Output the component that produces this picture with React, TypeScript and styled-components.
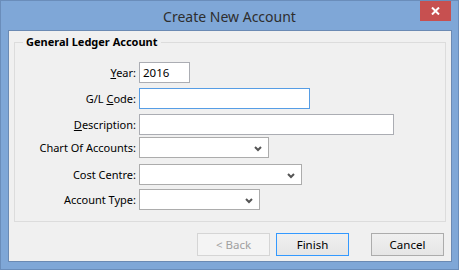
import styled, {createGlobalStyle} from 'styled-components'

const GlobalStyle = createGlobalStyle`
  html, body {
    margin: 0;
    padding: 0;
    background: #7ea6d6;
  }
  body {
    font-family: "Noto Sans", "Liberation Sans", sans-serif;
    font-size: 11px;
    color: #000;
  }
`

type FieldRow = {
  label: string
  hotkey?: number
  kind: 'text' | 'combo'
  width: number
  gap: number
  value?: string
  focused?: boolean
}

const rows: FieldRow[] = [
  {label: 'Year:', hotkey: 0, kind: 'text', width: 51, gap: 0, value: '2016'},
  {label: 'G/L Code:', hotkey: 4, kind: 'text', width: 171, gap: 5, focused: true},
  {label: 'Description:', hotkey: 0, kind: 'text', width: 255, gap: 5},
  {label: 'Chart Of Accounts:', kind: 'combo', width: 130, gap: 2},
  {label: 'Cost Centre:', kind: 'combo', width: 163, gap: 6},
  {label: 'Account Type:', kind: 'combo', width: 121, gap: 4}
]

function Label({text, hotkey}: {text: string; hotkey?: number}) {
  if (hotkey === undefined) return <LabelText>{text}</LabelText>
  return (
    <LabelText>
      {text.slice(0, hotkey)}
      <u>{text[hotkey]}</u>
      {text.slice(hotkey + 1)}
    </LabelText>
  )
}

function Chevron() {
  return (
    <svg width="8" height="6" viewBox="0 0 8 6">
      <polyline points="1,1 4,4 7,1" fill="none" stroke="#555" strokeWidth="2" />
    </svg>
  )
}

export default function App() {
  return (
    <>
      <GlobalStyle />
      <Window>
        <TitleBar>
          <Title>Create New Account</Title>
          <CloseButton>
            <svg width="9" height="8" viewBox="0 0 9 8">
              <path d="M1 0.5 L8 7.5 M8 0.5 L1 7.5" stroke="#fff" strokeWidth="2" />
            </svg>
          </CloseButton>
        </TitleBar>
        <Client>
          <GroupBox>
            <Legend>General Ledger Account</Legend>
            {rows.map(row => (
              <Row key={row.label} $gap={row.gap}>
                <Label text={row.label} hotkey={row.hotkey} />
                {row.kind === 'text' ? (
                  <TextBox $width={row.width} $focused={row.focused}>
                    {row.value}
                  </TextBox>
                ) : (
                  <Combo $width={row.width}>
                    <Chevron />
                  </Combo>
                )}
              </Row>
            ))}
          </GroupBox>
          <ButtonBar>
            <Button $variant="disabled">&lt; Back</Button>
            <Button $variant="default">Finish</Button>
            <Button $variant="normal" style={{marginLeft: 16}}>
              Cancel
            </Button>
          </ButtonBar>
        </Client>
      </Window>
    </>
  )
}

const Window = styled.div`
  width: 459px;
  height: 270px;
  box-sizing: border-box;
  border: 1px solid #6a8dba;
  background: #7fa7d7;
  display: flex;
  flex-direction: column;
  position: relative;
`

const TitleBar = styled.div`
  height: 29px;
  display: flex;
  align-items: center;
  justify-content: center;
`

const Title = styled.div`
  font-size: 14px;
  color: #2e2e2e;
  padding-top: 1px;
`

const CloseButton = styled.div`
  position: absolute;
  top: 0;
  right: 7px;
  width: 31px;
  height: 20px;
  background: #c75050;
  display: flex;
  align-items: center;
  justify-content: center;
`

const Client = styled.div`
  flex: 1;
  margin: 0 6px 7px 7px;
  background: #f0f0f0;
  border: 1px solid #6b8ab3;
  padding: 3px 5px 0 5px;
  display: flex;
  flex-direction: column;
`

const GroupBox = styled.fieldset`
  margin: 0;
  padding: 0 0 11px 0;
  border: 1px solid #dcdcdc;
`

const Legend = styled.legend`
  font-weight: bold;
  margin-left: 8px;
  padding: 0 3px;
  line-height: 16px;
  margin-bottom: 12px;
`

const Row = styled.div<{$gap: number}>`
  display: grid;
  grid-template-columns: 121px auto;
  column-gap: 3px;
  align-items: center;
  margin-top: ${p => p.$gap}px;
`

const LabelText = styled.span`
  text-align: right;
  white-space: nowrap;
`

const TextBox = styled.div<{$width: number; $focused?: boolean}>`
  width: ${p => p.$width}px;
  height: 21px;
  box-sizing: border-box;
  border: 1px solid ${p => (p.$focused ? '#569de5' : '#abadb3')};
  background: #fff;
  padding: 0 3px;
  line-height: 19px;
  font-size: 11.5px;
`

const Combo = styled.div<{$width: number}>`
  width: ${p => p.$width}px;
  height: 21px;
  box-sizing: border-box;
  border: 1px solid #acacac;
  background: #fff;
  display: flex;
  align-items: center;
  justify-content: flex-end;
  padding: 2px 6px 0 0;
`

const ButtonBar = styled.div`
  display: flex;
  justify-content: flex-end;
  gap: 6px;
  margin-top: 11px;
  padding-right: 2px;
`

const Button = styled.div<{$variant: 'disabled' | 'default' | 'normal'}>`
  width: 73px;
  height: 23px;
  box-sizing: border-box;
  display: flex;
  align-items: center;
  justify-content: center;
  font-size: 11.5px;
  border: 1px solid
    ${p =>
      p.$variant === 'disabled' ? '#d5d5d5' : p.$variant === 'default' ? '#3399ff' : '#acacac'};
  color: ${p => (p.$variant === 'disabled' ? '#a0a0a0' : '#000')};
  background: ${p =>
    p.$variant === 'disabled' ? '#f4f4f4' : 'linear-gradient(#f0f0f0, #e5e5e5)'};
`
